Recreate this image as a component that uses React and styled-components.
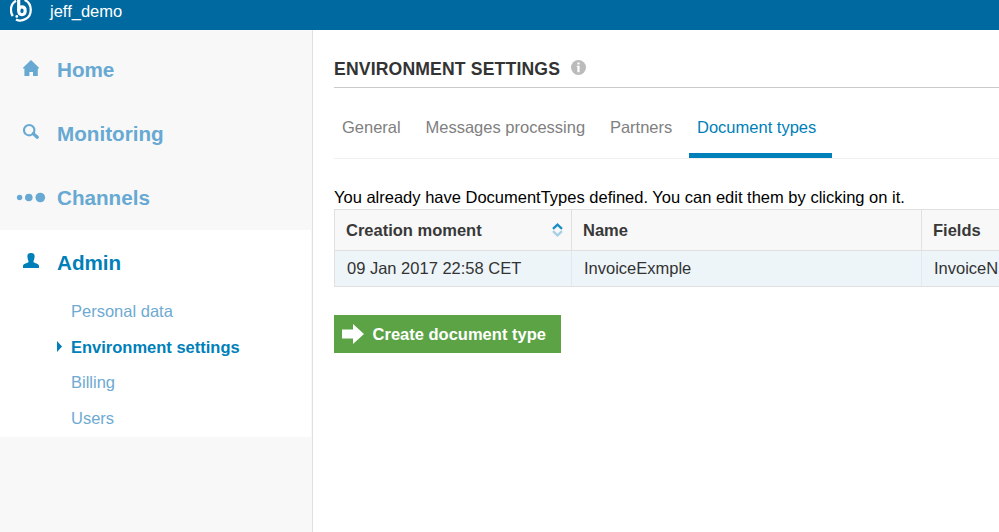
import React from "react";
import styled, { createGlobalStyle } from "styled-components";

const GlobalStyle = createGlobalStyle`
  *, *::before, *::after { box-sizing: border-box; }
  html, body { margin: 0; height: 100%; overflow: hidden; background: #fff; }
  body { font-family: "Liberation Sans", Arial, sans-serif; font-size: 16.5px; color: #000; }
`;

const Page = styled.div`
  display: flex;
  flex-direction: column;
  height: 100vh;
`;

const TopBar = styled.header`
  flex: 0 0 30px;
  display: flex;
  align-items: flex-start;
  padding-left: 10px;
  background: #0069a0;
  color: #fff;
  overflow: hidden;
`;

const Logo = styled.svg`
  display: block;
  width: 22px;
  height: 22px;
`;

const Account = styled.span`
  margin-left: 18px;
  line-height: 22px;
`;

const Body = styled.div`
  flex: 1;
  display: flex;
  min-height: 0;
`;

const Sidebar = styled.nav`
  flex: 0 0 313px;
  padding-top: 8px;
  background: #f8f8f8;
  border-right: 1px solid #e0e0e0;
`;

const NavItem = styled.a`
  display: flex;
  align-items: center;
  height: 64px;
  padding-top: ${(p) => (p.$active ? "2px" : "0")};
  color: ${(p) => (p.$active ? "#007fb9" : "#67a9d2")};
  font-size: 20.65px;
  font-weight: bold;
`;

const NavIcon = styled.svg`
  display: block;
  flex: 0 0 30px;
  width: 30px;
  height: 20px;
  margin: 0 11px 4px 16px;
  fill: currentColor;
`;

const Section = styled.div`
  width: 311px;
  height: 207px;
  background: #fff;
`;

const SubList = styled.ul`
  list-style: none;
  margin: 0;
  padding: 0;
`;

const SubItem = styled.li`
  display: flex;
  align-items: center;
  height: 35.6px;
  padding-left: 57px;
  color: ${(p) => (p.$active ? "#007fb9" : "#6eaad2")};
  font-weight: ${(p) => (p.$active ? "bold" : "normal")};
`;

const Marker = styled.svg`
  display: block;
  width: 5px;
  height: 11px;
  margin: 0 9px 2px 0;
  fill: ${(p) => (p.$active ? "#007fb9" : "none")};
`;

const Main = styled.main`
  flex: 1;
  min-width: 0;
  padding-left: 21px;
  overflow: hidden;
`;

const TitleRow = styled.div`
  display: flex;
  align-items: center;
  height: 58px;
  padding-top: 20px;
  border-bottom: 1px solid #cacaca;
`;

const Title = styled.h1`
  margin: 0;
  color: #333;
  font-size: 17.6px;
  line-height: 22px;
  letter-spacing: 0.16px;
`;

const InfoIcon = styled.svg`
  display: block;
  width: 15px;
  height: 15px;
  margin: 0 0 2px 11px;
`;

const Tabs = styled.div`
  display: flex;
  height: 71px;
  border-bottom: 1px solid #f0f0f0;
`;

const Tab = styled.a`
  height: 70px;
  padding: 27px ${(p) => p.$right}px 0 8px;
  line-height: 24px;
  white-space: nowrap;
  color: ${(p) => (p.$active ? "#007fb9" : "#808080")};
  border-bottom: 5px solid ${(p) => (p.$active ? "#007fb9" : "transparent")};
`;

const Notice = styled.p`
  margin: 26px 0 0;
  line-height: 24px;
`;

const TableRow = styled.div`
  display: grid;
  grid-template-columns: 237px 350px 300px;
  height: ${(p) => (p.$head ? "42px" : "36px")};
  border-top: ${(p) => (p.$head ? "1px solid #e0e0e0" : "0")};
  border-bottom: 1px solid #e0e0e0;
  border-left: 1px solid #e0e0e0;
  background: ${(p) => (p.$head ? "#f8f8f8" : "#edf5f9")};
  color: ${(p) => (p.$head ? "#383838" : "#333")};
  font-weight: ${(p) => (p.$head ? "bold" : "normal")};
`;

const Cell = styled.div`
  display: flex;
  align-items: center;
  justify-content: space-between;
  padding: 0 8px 0 ${(p) => (p.$head ? 11 : 12)}px;
  border-right: 1px solid ${(p) => (p.$head ? "#e0e0e0" : "#deebf6")};
  white-space: nowrap;
`;

const SortIcon = styled.svg`
  display: block;
  width: 11px;
  height: 14px;
  fill: none;
  stroke-width: 2.3;
`;

const Button = styled.button`
  display: flex;
  align-items: center;
  width: 227px;
  height: 38px;
  margin-top: 28px;
  padding: 0 0 0 8px;
  border: 0;
  background: #5ba345;
  color: #fff;
  font: bold 16.5px "Liberation Sans", Arial, sans-serif;
  white-space: nowrap;
`;

const ArrowIcon = styled.svg`
  display: block;
  width: 22px;
  height: 20px;
  margin-right: 8.6px;
  fill: #fff;
`;

const icons = {
  home: <path d="M15 2 L23 9.8 V10.4 H21.8 V18 H17 V14 H13.4 V18 H8.4 V10.4 H7 V9.8 Z" />,
  search: (
    <>
      <circle cx="13.2" cy="8.2" r="5.2" fill="none" stroke="currentColor" strokeWidth="2.1" />
      <path d="M17.2 11.6 L21.3 15.3" fill="none" stroke="currentColor" strokeWidth="3.2" strokeLinecap="round" />
    </>
  ),
  channels: (
    <>
      <circle cx="3.6" cy="11.5" r="2.7" />
      <circle cx="12.8" cy="11.5" r="3.8" />
      <circle cx="24.3" cy="11.5" r="4.8" />
    </>
  ),
  admin: <path d="M15 2 C18.2 2 18.9 3.8 18.5 6.4 C18.2 8.8 17.4 9.6 17.4 11 C18.5 12.4 23 12.4 23 15 V17 H7 V15 C7 12.4 11.5 12.4 12.6 11 C12.6 9.6 11.8 8.8 11.5 6.4 C11.1 3.8 11.8 2 15 2 Z" />,
};

const navItems = [
  { label: "Home", icon: "home" },
  { label: "Monitoring", icon: "search" },
  { label: "Channels", icon: "channels" },
];

const subItems = ["Personal data", "Environment settings", "Billing", "Users"];

const tabs = [
  { label: "General", right: 16.8 },
  { label: "Messages processing", right: 16.8 },
  { label: "Partners", right: 16.8 },
  { label: "Document types", right: 15.6 },
];

export default function App() {
  return (
    <Page>
      <GlobalStyle />
      <TopBar>
        <Logo viewBox="0 0 22 22" fill="none" stroke="#fff">
          <path d="M6 .8 C.2 4 -.2 11.5 2.8 16" strokeWidth="2.3" />
          <path d="M14.6 0 C22.6 3.4 22.6 15.4 15.6 19 C12 21 8.8 21 6 19.4" strokeWidth="2.3" />
          <path d="M8.7 0 V11" strokeWidth="3.2" />
          <path d="M8.7 10.6 C8.7 5.6 15.2 5.6 15.2 10.8 C15.2 16 8.7 16 8.7 10.8" strokeWidth="3.1" />
          <circle cx="6.8" cy="16.4" r="1.4" fill="#fff" stroke="none" />
        </Logo>
        <Account>jeff_demo</Account>
      </TopBar>
      <Body>
        <Sidebar>
          {navItems.map((item) => (
            <NavItem key={item.label}>
              <NavIcon viewBox="0 0 30 20">{icons[item.icon]}</NavIcon>
              {item.label}
            </NavItem>
          ))}
          <Section>
            <NavItem $active>
              <NavIcon viewBox="0 0 30 20">{icons.admin}</NavIcon>
              Admin
            </NavItem>
            <SubList>
              {subItems.map((label) => (
                <SubItem key={label} $active={label === "Environment settings"}>
                  <Marker viewBox="0 0 5 11" $active={label === "Environment settings"}>
                    <path d="M0 0 L5 5.5 L0 11 Z" />
                  </Marker>
                  {label}
                </SubItem>
              ))}
            </SubList>
          </Section>
        </Sidebar>
        <Main>
          <TitleRow>
            <Title>ENVIRONMENT SETTINGS</Title>
            <InfoIcon viewBox="0 0 15 15">
              <circle cx="7.5" cy="7.5" r="7.5" fill="#bbb" />
              <path d="M6.4 2.5 H8.6 V4.6 H6.4 Z M5.8 5.8 H8.6 V12.2 H6.4 V7 H5.8 Z" fill="#fff" />
            </InfoIcon>
          </TitleRow>
          <Tabs>
            {tabs.map((tab) => (
              <Tab key={tab.label} $right={tab.right} $active={tab.label === "Document types"}>
                {tab.label}
              </Tab>
            ))}
          </Tabs>
          <Notice>You already have DocumentTypes defined. You can edit them by clicking on it.</Notice>
          <TableRow $head>
            <Cell $head>
              Creation moment
              <SortIcon viewBox="0 0 11 14">
                <path d="M1 5.8 L5.5 1.6 L10 5.8" stroke="#1b8fc4" />
                <path d="M1 8.2 L5.5 12.4 L10 8.2" stroke="#a5d0e6" />
              </SortIcon>
            </Cell>
            <Cell $head>Name</Cell>
            <Cell $head>Fields</Cell>
          </TableRow>
          <TableRow>
            <Cell>09 Jan 2017 22:58 CET</Cell>
            <Cell>InvoiceExmple</Cell>
            <Cell>InvoiceN</Cell>
          </TableRow>
          <Button type="button">
            <ArrowIcon viewBox="0 0 22 20">
              <path d="M0 5.5 H11 V0 L22 10 L11 20 V14.5 H0 Z" />
            </ArrowIcon>
            Create document type
          </Button>
        </Main>
      </Body>
    </Page>
  );
}
